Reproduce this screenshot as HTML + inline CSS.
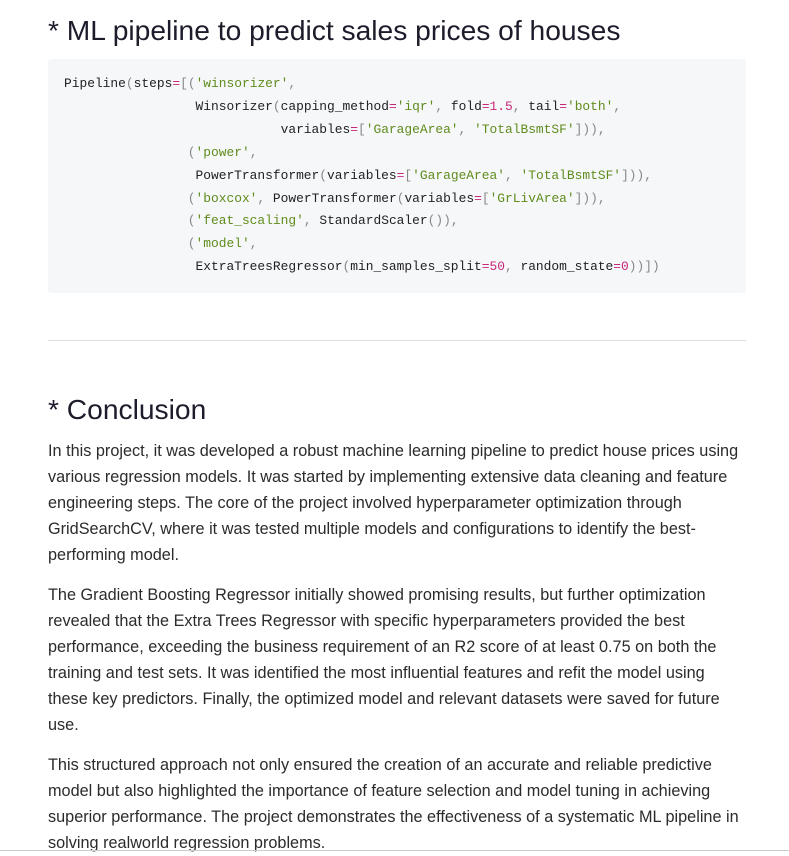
<!DOCTYPE html>
<html><head><meta charset="utf-8"><style>
body{margin:0;background:#fff;width:789px;height:852px;overflow:hidden;position:relative;font-family:"Liberation Sans",sans-serif;color:#2b2b2b}
h2{position:absolute;left:48px;margin:0;font-weight:400;font-size:28.2px;color:#1c1c2b;white-space:nowrap}
.code{position:absolute;left:48px;top:59px;width:698px;height:234px;background:#f6f7f9;border-radius:3px}
pre{margin:0;position:absolute;left:16px;top:14px;font-family:"Liberation Mono",monospace;font-size:12.9px;line-height:22.9px;color:#222}
.p{color:#888}.s{color:#5f8c1c}.n{color:#c8267a}
hr{position:absolute;left:48px;top:340px;width:698px;margin:0;border:0;border-top:1px solid #ddd}
.t{position:absolute;left:48px;font-size:16.25px;line-height:26px;color:#2b2b2b}
.t div{white-space:nowrap}
.bot{position:absolute;left:0;top:850px;width:789px;border-top:1px solid #ccc}
</style></head><body>
<h2 style="top:14px">* ML pipeline to predict sales prices of houses</h2>
<div class="code"><pre>Pipeline<span class="p">(</span>steps<span class="n">=</span><span class="p">[(</span><span class="s">'winsorizer'</span><span class="p">,</span>
                 Winsorizer<span class="p">(</span>capping_method<span class="n">=</span><span class="s">'iqr'</span><span class="p">,</span> fold<span class="n">=1.5</span><span class="p">,</span> tail<span class="n">=</span><span class="s">'both'</span><span class="p">,</span>
                            variables<span class="n">=</span><span class="p">[</span><span class="s">'GarageArea'</span><span class="p">,</span> <span class="s">'TotalBsmtSF'</span><span class="p">])),</span>
                <span class="p">(</span><span class="s">'power'</span><span class="p">,</span>
                 PowerTransformer<span class="p">(</span>variables<span class="n">=</span><span class="p">[</span><span class="s">'GarageArea'</span><span class="p">,</span> <span class="s">'TotalBsmtSF'</span><span class="p">])),</span>
                <span class="p">(</span><span class="s">'boxcox'</span><span class="p">,</span> PowerTransformer<span class="p">(</span>variables<span class="n">=</span><span class="p">[</span><span class="s">'GrLivArea'</span><span class="p">])),</span>
                <span class="p">(</span><span class="s">'feat_scaling'</span><span class="p">,</span> StandardScaler<span class="p">()),</span>
                <span class="p">(</span><span class="s">'model'</span><span class="p">,</span>
                 ExtraTreesRegressor<span class="p">(</span>min_samples_split<span class="n">=50</span><span class="p">,</span> random_state<span class="n">=0</span><span class="p">))])</span></pre></div>
<hr>
<h2 style="top:393px">* Conclusion</h2>
<div class="t" style="top:438px">
<div>In this project, it was developed a robust machine learning pipeline to predict house prices using</div>
<div>various regression models. It was started by implementing extensive data cleaning and feature</div>
<div>engineering steps. The core of the project involved hyperparameter optimization through</div>
<div>GridSearchCV, where it was tested multiple models and configurations to identify the best-</div>
<div>performing model.</div>
</div>
<div class="t" style="top:582px">
<div>The Gradient Boosting Regressor initially showed promising results, but further optimization</div>
<div>revealed that the Extra Trees Regressor with specific hyperparameters provided the best</div>
<div>performance, exceeding the business requirement of an R2 score of at least 0.75 on both the</div>
<div>training and test sets. It was identified the most influential features and refit the model using</div>
<div>these key predictors. Finally, the optimized model and relevant datasets were saved for future</div>
<div>use.</div>
</div>
<div class="t" style="top:752px">
<div>This structured approach not only ensured the creation of an accurate and reliable predictive</div>
<div>model but also highlighted the importance of feature selection and model tuning in achieving</div>
<div>superior performance. The project demonstrates the effectiveness of a systematic ML pipeline in</div>
<div>solving realworld regression problems.</div>
</div>
<div class="bot"></div>
</body></html>
